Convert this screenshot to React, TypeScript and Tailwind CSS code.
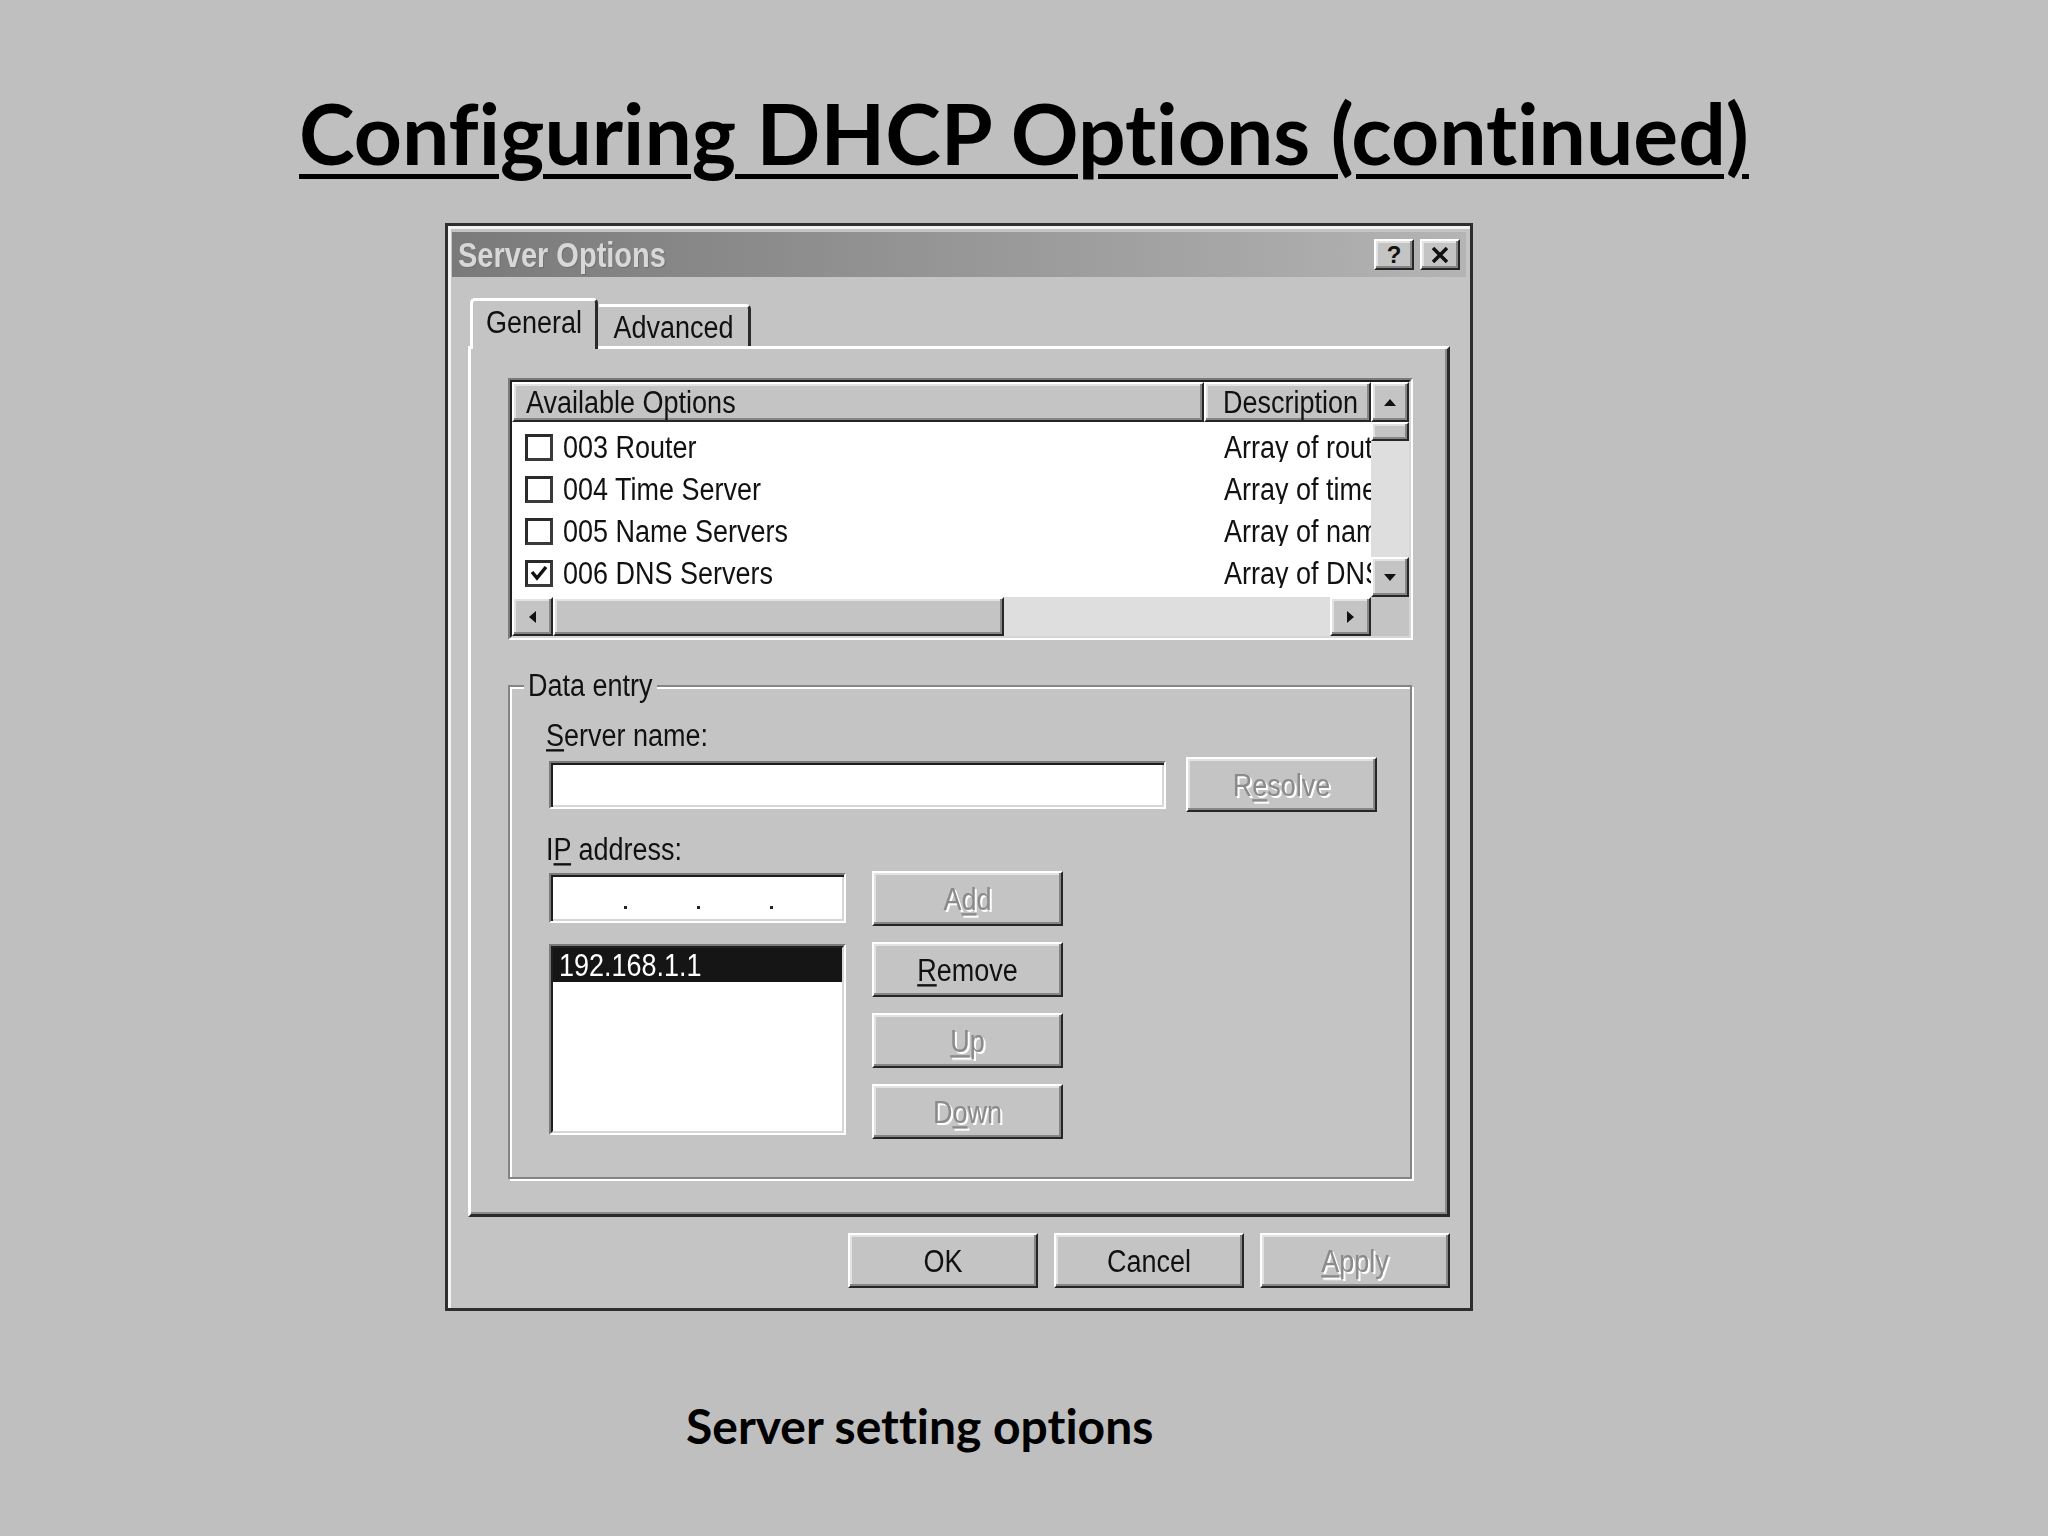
import React from "react";

const raised =
  "border-2 border-t-white border-l-white border-r-[#262626] border-b-[#262626] shadow-[inset_-2px_-2px_0_#868686,inset_2px_2px_0_#e2e2e2]";
const disabledText = "text-[#8a8a8a] [text-shadow:2px_2px_0_#ffffff]";

function Tx({ children, className = "" }: { children: React.ReactNode; className?: string }) {
  return <span className={"inline-block scale-y-[1.18] whitespace-nowrap " + className}>{children}</span>;
}

function U({ children }: { children: React.ReactNode }) {
  return <span className="underline decoration-[2px] underline-offset-[3px]">{children}</span>;
}

function Btn({
  children,
  disabled = false,
  className = "",
}: {
  children: React.ReactNode;
  disabled?: boolean;
  className?: string;
}) {
  return (
    <div
      className={
        "flex items-center justify-center bg-[#c4c4c4] text-[27px] leading-[30px] " +
        raised +
        " " +
        (disabled ? disabledText : "text-[#111]") +
        " " +
        className
      }
    >
      <Tx>{children}</Tx>
    </div>
  );
}

function Arrow({ dir }: { dir: "up" | "down" | "left" | "right" }) {
  const d =
    dir === "up"
      ? "M6 0 L12 7 L0 7 Z"
      : dir === "down"
      ? "M0 0 L12 0 L6 7 Z"
      : dir === "left"
      ? "M7 0 L7 12 L0 6 Z"
      : "M0 0 L7 6 L0 12 Z";
  const w = dir === "up" || dir === "down" ? 12 : 7;
  const h = dir === "up" || dir === "down" ? 7 : 12;
  return (
    <svg width={w} height={h} viewBox={`0 0 ${w} ${h}`}>
      <path d={d} fill="#111" />
    </svg>
  );
}

function CheckBox({ checked }: { checked?: boolean }) {
  return (
    <div className="w-[28px] h-[27px] bg-white border-[3px] border-t-[#2a2a2a] border-l-[#2a2a2a] border-r-[#3a3a3a] border-b-[#3a3a3a] flex items-center justify-center">
      {checked && (
        <svg width="18" height="18" viewBox="0 0 18 18">
          <polyline points="2,8 7,14 16,3" fill="none" stroke="#111" strokeWidth="3.5" />
        </svg>
      )}
    </div>
  );
}

const rows = [
  { name: "003 Router", desc: "Array of rout", checked: false },
  { name: "004 Time Server", desc: "Array of time", checked: false },
  { name: "005 Name Servers", desc: "Array of nam", checked: false },
  { name: "006 DNS Servers", desc: "Array of DNS", checked: true },
];

export default function App() {
  return (
    <div className="w-[2048px] h-[1536px] bg-[#bfbfbf] flex flex-col overflow-hidden font-['Liberation_Sans',Arial,sans-serif] text-[#111]">
      <h1 className="mt-[83px] text-center font-['Lato',sans-serif] font-bold text-[84px] leading-[100px] text-black underline decoration-[5px] underline-offset-[9px] [font-variant-ligatures:none]">
        Configuring DHCP Options (continued)
      </h1>

      {/* Dialog */}
      <div className="ml-[445px] mt-[40px] w-[1028px] h-[1088px] bg-[#c4c4c4] border-[3px] border-[#2e2e2e] shadow-[inset_3px_3px_0_#f2f2f2] pt-[6px] px-[4px] flex flex-col">
        {/* Title bar */}
        <div className="h-[45px] shrink-0 flex items-center bg-linear-to-r from-[#7a7a7a] to-[#b4b4b4] pl-[6px] pr-[6px]">
          <Tx className="font-bold text-[29px] leading-[30px] text-[#d8d8d8] [text-shadow:1px_1px_0_#707070]">
            Server Options
          </Tx>
          <div className="ml-auto flex gap-[6px]">
            <div className={"w-[40px] h-[31px] bg-[#c4c4c4] flex items-center justify-center " + raised}>
              <span className="font-bold text-[24px] leading-none text-[#111]">?</span>
            </div>
            <div className={"w-[40px] h-[31px] bg-[#c4c4c4] flex items-center justify-center " + raised}>
              <svg width="18" height="16" viewBox="0 0 18 16">
                <path d="M2 1 L16 15 M16 1 L2 15" stroke="#111" strokeWidth="3.5" />
              </svg>
            </div>
          </div>
        </div>

        <div className="px-[16px] mt-[21px] flex flex-col">
          {/* Tabs */}
          <div className="flex items-end h-[51px] -mb-[3px] relative z-10">
            <div className="ml-[2px] w-[128px] h-[51px] bg-[#c4c4c4] border-t-[3px] border-l-[3px] border-r-[3px] border-t-white border-l-white border-r-[#2a2a2a] rounded-t-[5px] flex items-start justify-center pt-[6px] text-[27px] leading-[30px]">
              <Tx>General</Tx>
            </div>
            <div className="ml-[1px] mb-[3px] w-[152px] h-[42px] bg-[#c4c4c4] border-t-[3px] border-r-[3px] border-t-white border-r-[#2a2a2a] rounded-tr-[5px] flex items-center justify-center text-[27px] leading-[30px]">
              <Tx>Advanced</Tx>
            </div>
          </div>

          {/* Panel */}
          <div className="h-[871px] border-[3px] border-t-white border-l-white border-r-[#2a2a2a] border-b-[#2a2a2a] shadow-[inset_-2px_-2px_0_#8a8a8a] pt-[29px] pl-[37px] flex flex-col">
            {/* List view */}
            <div className="w-[905px] h-[262px] border-2 border-t-[#7a7a7a] border-l-[#7a7a7a] border-r-white border-b-white">
              <div className="w-full h-full border-2 border-t-[#1e1e1e] border-l-[#1e1e1e] border-r-[#d6d6d6] border-b-[#d6d6d6] flex flex-col overflow-hidden">
                <div className="flex h-[215px]">
                  <div className="flex-1 flex flex-col min-w-0">
                    <div className="h-[40px] flex text-[27px] leading-[30px]">
                      <div className={"w-[692px] bg-[#c4c4c4] flex items-center pl-[12px] " + raised}>
                        <Tx>Available Options</Tx>
                      </div>
                      <div className={"flex-1 bg-[#c4c4c4] flex items-center pl-[17px] overflow-hidden " + raised}>
                        <Tx>Description</Tx>
                      </div>
                    </div>
                    <div className="flex-1 bg-white pt-[4px] overflow-hidden">
                      {rows.map((r) => (
                        <div key={r.name} className="h-[42px] flex items-center text-[27px] leading-[30px]">
                          <div className="w-[692px] flex items-center pl-[13px]">
                            <CheckBox checked={r.checked} />
                            <Tx className="ml-[10px]">{r.name}</Tx>
                          </div>
                          <div className="flex-1 overflow-hidden pl-[20px]">
                            <Tx>{r.desc}</Tx>
                          </div>
                        </div>
                      ))}
                    </div>
                  </div>
                  {/* Vertical scrollbar */}
                  <div className="w-[38px] flex flex-col bg-[#dedede]">
                    <div className={"h-[40px] bg-[#c4c4c4] flex items-center justify-center " + raised}>
                      <Arrow dir="up" />
                    </div>
                    <div className={"h-[19px] bg-[#c4c4c4] " + raised} />
                    <div className="flex-1" />
                    <div className={"h-[40px] bg-[#c4c4c4] flex items-center justify-center " + raised}>
                      <Arrow dir="down" />
                    </div>
                  </div>
                </div>
                {/* Horizontal scrollbar */}
                <div className="flex h-[39px]">
                  <div className="flex-1 flex bg-[#dedede]">
                    <div className={"w-[41px] bg-[#c4c4c4] flex items-center justify-center " + raised}>
                      <Arrow dir="left" />
                    </div>
                    <div className={"w-[451px] bg-[#c4c4c4] " + raised} />
                    <div className="flex-1" />
                    <div className={"w-[41px] bg-[#c4c4c4] flex items-center justify-center " + raised}>
                      <Arrow dir="right" />
                    </div>
                  </div>
                  <div className="w-[38px] bg-[#c4c4c4]" />
                </div>
              </div>
            </div>

            {/* Data entry group */}
            <div className="relative mt-[45px] w-[904px] h-[494px] border-2 border-[#858585] shadow-[inset_2px_2px_0_#ffffff,2px_2px_0_#ffffff] pt-[33px] pl-[39px] flex flex-col text-[27px] leading-[30px]">
              <div className="absolute -top-[17px] left-[14px] px-[4px] bg-[#c4c4c4] h-[30px]">
                <Tx>Data entry</Tx>
              </div>
              <div className="h-[30px] -ml-[3px]">
                <Tx>
                  <U>S</U>erver name:
                </Tx>
              </div>
              <div className="mt-[7px] h-[55px] flex items-center">
                <div className="w-[617px] h-[48px] bg-white border-2 border-t-[#7a7a7a] border-l-[#7a7a7a] border-r-white border-b-white shadow-[inset_2px_2px_0_#1e1e1e,inset_-2px_-2px_0_#d6d6d6]" />
                <Btn disabled className="ml-[20px] w-[191px] h-[55px]">
                  R<U>e</U>solve
                </Btn>
              </div>
              <div className="mt-[22px] h-[30px] -ml-[3px]">
                <Tx>
                  I<U>P</U> address:
                </Tx>
              </div>
              <div className="mt-[7px] flex gap-[26px]">
                <div className="w-[297px] pt-[2px] flex flex-col">
                  <div className="h-[50px] bg-white border-2 border-t-[#7a7a7a] border-l-[#7a7a7a] border-r-white border-b-white shadow-[inset_2px_2px_0_#1e1e1e,inset_-2px_-2px_0_#d6d6d6] flex items-end pb-[12px] pl-[73px] gap-[70px]">
                    <div className="w-[3px] h-[3px] bg-[#222]" />
                    <div className="w-[3px] h-[3px] bg-[#222]" />
                    <div className="w-[3px] h-[3px] bg-[#222]" />
                  </div>
                  <div className="mt-[21px] h-[191px] border-2 border-t-[#7a7a7a] border-l-[#7a7a7a] border-r-white border-b-white">
                    <div className="w-full h-full bg-white border-2 border-t-[#1e1e1e] border-l-[#1e1e1e] border-r-[#d6d6d6] border-b-[#d6d6d6]">
                      <div className="h-[34px] bg-[#151515] text-white flex items-center pl-[6px]">
                        <Tx>192.168.1.1</Tx>
                      </div>
                    </div>
                  </div>
                </div>
                <div className="flex flex-col gap-[16px]">
                  <Btn disabled className="w-[191px] h-[55px]">
                    A<U>d</U>d
                  </Btn>
                  <Btn className="w-[191px] h-[55px]">
                    <U>R</U>emove
                  </Btn>
                  <Btn disabled className="w-[191px] h-[55px]">
                    <U>U</U>p
                  </Btn>
                  <Btn disabled className="w-[191px] h-[55px]">
                    D<U>o</U>wn
                  </Btn>
                </div>
              </div>
            </div>
          </div>

          {/* Bottom buttons */}
          <div className="mt-[16px] flex justify-end gap-[16px]">
            <Btn className="w-[190px] h-[55px]">OK</Btn>
            <Btn className="w-[190px] h-[55px]">Cancel</Btn>
            <Btn disabled className="w-[190px] h-[55px]">
              <U>A</U>pply
            </Btn>
          </div>
        </div>
      </div>

      <p className="ml-[686px] mt-[85px] font-['Lato',sans-serif] font-bold text-[48px] leading-[60px] text-black whitespace-nowrap [font-variant-ligatures:none]">
        Server setting options
      </p>
    </div>
  );
}
